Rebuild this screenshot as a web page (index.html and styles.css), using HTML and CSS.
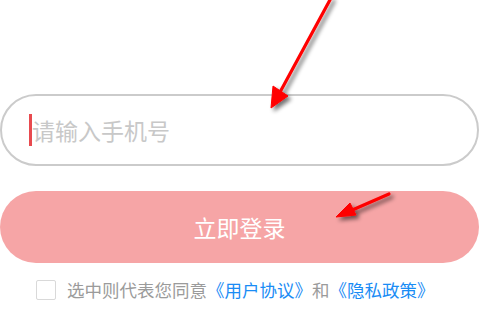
FILE: index.html
```html
<!DOCTYPE html>
<html lang="zh">
<head>
<meta charset="utf-8">
<link rel="stylesheet" href="styles.css">
</head>
<body>
<div class="page">
  <div class="form">
    <div class="input">
      <span class="cursor"></span>
      <span class="placeholder">请输入手机号</span>
    </div>
    <button class="submit">立即登录</button>
    <div class="agree">
      <span class="check"></span>
      <span class="agree-text">选中则代表您同意<a class="link">《用户协议》</a>和<a class="link">《隐私政策》</a></span>
    </div>
  </div>
  <svg class="arrows" width="490" height="329" viewBox="0 0 490 329">
    <defs>
      <filter id="sh" x="-50%" y="-50%" width="200%" height="200%">
        <feGaussianBlur in="SourceAlpha" stdDeviation="2"/>
        <feOffset dx="3" dy="3" result="b"/>
        <feComponentTransfer><feFuncA type="linear" slope="0.55"/></feComponentTransfer>
        <feMerge><feMergeNode/><feMergeNode in="SourceGraphic"/></feMerge>
      </filter>
    </defs>
    <g filter="url(#sh)" fill="#ff0000" stroke="#ff0000">
      <line x1="331" y1="-2" x2="279" y2="94" stroke-width="3.2" stroke-linecap="round"/>
      <polygon points="271,108 273,86 288,96" stroke-width="1" stroke-linejoin="round"/>
      <line x1="389" y1="194" x2="350" y2="211" stroke-width="3.2" stroke-linecap="round"/>
      <polygon points="336,217 350,203 356,215" stroke-width="1" stroke-linejoin="round"/>
    </g>
  </svg>
</div>
</body>
</html>
```
FILE: styles.css
```css
html, body {
  margin: 0;
  padding: 0;
  background: #ffffff;
}
.page {
  position: relative;
  width: 490px;
  height: 329px;
  overflow: hidden;
  font-family: "Noto Sans CJK SC", "Noto Sans", sans-serif;
}
.form {
  display: flex;
  flex-direction: column;
  padding-top: 94px;
  width: 479px;
}
.input {
  box-sizing: border-box;
  height: 72px;
  border: 2px solid #cbcbcb;
  border-radius: 36px;
  display: flex;
  align-items: center;
  padding-left: 27px;
}
.cursor {
  width: 3px;
  height: 32px;
  background: #e84a4f;
}
.placeholder {
  font-size: 23px;
  color: #c8c8c8;
  line-height: 1;
  margin-top: 1px;
}
.submit {
  margin-top: 25px;
  height: 72px;
  border: none;
  border-radius: 36px;
  background: #f6a5a6;
  color: #ffffff;
  font-family: inherit;
  font-size: 23px;
  padding: 0;
  display: flex;
  align-items: center;
  justify-content: center;
}
.agree {
  display: flex;
  align-items: center;
  margin-top: 17px;
  padding-left: 36px;
}
.check {
  box-sizing: border-box;
  width: 20px;
  height: 20px;
  border: 1px solid #d9d9d9;
  border-radius: 2px;
  margin-right: 11px;
}
.agree-text {
  font-size: 17.5px;
  color: #9b9b9b;
  line-height: 1;
  white-space: nowrap;
}
.link {
  color: #1a8cf5;
}
.arrows {
  position: absolute;
  left: 0;
  top: 0;
  pointer-events: none;
}
```
